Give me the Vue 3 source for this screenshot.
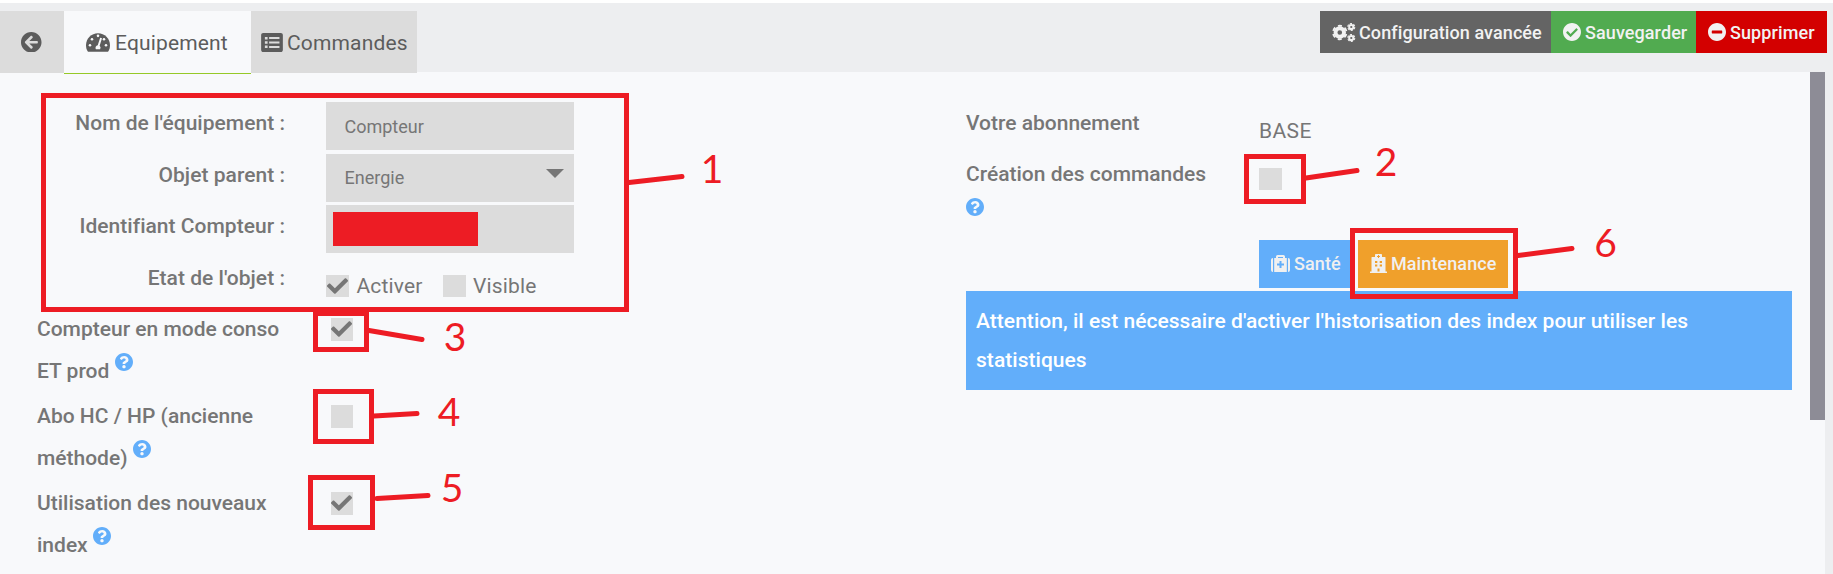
<script setup>
const ICONS = {
  check: 'M173.9 439.4l-166.4-166.4c-10-10-10-26.2 0-36.2l36.2-36.2c10-10 26.2-10 36.2 0L192 312.7 432.1 72.6c10-10 26.2-10 36.2 0l36.2 36.2c10 10 10 26.2 0 36.2l-294.4 294.4c-10 10-26.2 10-36.2 0z',
  checkCircle: 'M504 256c0 136.967-111.033 248-248 248S8 392.967 8 256 119.033 8 256 8s248 111.033 248 248zM227.314 387.314l184-184c6.248-6.248 6.248-16.379 0-22.627l-22.627-22.627c-6.248-6.249-16.379-6.249-22.628 0L216 308.118l-70.059-70.059c-6.248-6.248-16.379-6.248-22.628 0l-22.627 22.627c-6.248 6.248-6.248 16.379 0 22.627l104 104c6.249 6.249 16.379 6.249 22.628.001z',
  minus: 'M256 8C119 8 8 119 8 256s111 248 248 248 248-111 248-248S393 8 256 8zM124 296c-6.6 0-12-5.4-12-12v-56c0-6.6 5.4-12 12-12h264c6.6 0 12 5.4 12 12v56c0 6.6-5.4 12-12 12H124z',
  help: 'M504 256c0 136.997-111.043 248-248 248S8 392.997 8 256C8 119.083 119.043 8 256 8s248 111.083 248 248zM262.655 90c-54.497 0-89.255 22.957-116.549 63.758-3.536 5.286-2.353 12.415 2.715 16.258l34.699 26.31c5.205 3.947 12.621 3.008 16.665-2.122 17.864-22.658 30.113-35.797 57.303-35.797 20.429 0 45.698 13.148 45.698 32.958 0 14.976-12.363 22.667-32.534 33.976C247.128 238.528 216 254.941 216 296v4c0 6.627 5.373 12 12 12h56c6.627 0 12-5.373 12-12v-1.333c0-28.462 83.186-29.647 83.186-106.667 0-58.002-60.165-102-116.531-102zM256 338c-25.365 0-46 20.635-46 46 0 25.364 20.635 46 46 46s46-20.636 46-46c0-25.365-20.635-46-46-46z',
  back: 'M256 504C119 504 8 393 8 256S119 8 256 8s248 111 248 248-111 248-248 248zm28.9-143.6L209.4 288H392c13.3 0 24-10.7 24-24v-16c0-13.3-10.7-24-24-24H209.4l75.5-72.4c9.7-9.3 9.9-24.8.4-34.3l-11-10.9c-9.4-9.4-24.6-9.4-33.9 0L107.7 239c-9.4 9.4-9.4 24.6 0 33.9l132.7 132.7c9.4 9.4 24.6 9.4 33.9 0l11-10.9c9.5-9.5 9.3-25-.4-34.3z',
}
const options = [
  { first: 'Compteur en mode conso', last: 'ET prod', checked: true },
  { first: 'Abo HC / HP (ancienne', last: 'méthode)', checked: false },
  { first: 'Utilisation des nouveaux', last: 'index', checked: true },
]
const frames = [
  { x: 41, y: 93, w: 588, h: 219 },
  { x: 1244, y: 154, w: 62, h: 50 },
  { x: 313, y: 311, w: 56, h: 41 },
  { x: 313, y: 389, w: 61, h: 55 },
  { x: 308, y: 475, w: 67, h: 55 },
  { x: 1350, y: 228, w: 168, h: 71 },
]
const leaders = [
  'M629 182.5L682 176.5', 'M1306 178L1357 170.5', 'M369 330.5L422 339.5',
  'M374 416L417 413.5', 'M377 498.5L428 495.5', 'M1518 255.5L1572 248.5',
]
const digits = [
  { n: 1, x: 712, y: 183 }, { n: 2, x: 1386, y: 176 }, { n: 3, x: 455, y: 351 },
  { n: 4, x: 449, y: 426 }, { n: 5, x: 452, y: 502 }, { n: 6, x: 1605.5, y: 257 },
]
</script>

<template>
  <div class="page">
    <header class="topbar">
      <nav class="tabs">
        <a class="tab tab-back"><svg class="ic-back" viewBox="8 8 496 496"><path :d="ICONS.back" /></svg></a>
        <a class="tab tab-active">
          <svg class="ic-gauge" viewBox="0 32 576 448">
            <path d="M288 32C129 32 0 161 0 320c0 53 14 102 39 145 6 9 16 15 27 15h444c11 0 21-6 27-15 25-43 39-92 39-145 0-159-129-288-288-288z" />
            <g class="gauge-cut"><circle cx="288" cy="96" r="31" /><circle cx="144" cy="176" r="31" /><circle cx="96" cy="320" r="31" /><circle cx="480" cy="320" r="31" /><circle cx="432" cy="176" r="31" /><path d="M339 143l45 13-57 180a63 63 0 0 1 12 80H237a63 63 0 0 1 45-95z" /></g>
          </svg>
          <span>Equipement</span>
        </a>
        <a class="tab tab-cmd">
          <svg class="ic-list" viewBox="0 32 512 448"><path fill-rule="evenodd" d="M464 480H48c-27 0-48-21-48-48V80c0-27 21-48 48-48h416c27 0 48 21 48 48v352c0 27-21 48-48 48zM88 124h64v64H88zM88 224h64v64H88zM88 324h64v64H88zM188 128h244v48H188zM188 232h244v48H188zM188 336h244v48H188z" /></svg>
          <span>Commandes</span>
        </a>
      </nav>
      <div class="actions">
        <a class="btn btn-config">
          <svg class="ic-cogs" viewBox="0 0 640 512">
            <g class="gear">
              <circle cx="206" cy="256" r="115" stroke-width="104" />
              <circle cx="206" cy="256" r="182" stroke-width="48" pathLength="60" stroke-dasharray="5.600 4.400" transform="rotate(13 206 256)" />
              <circle cx="516" cy="108" r="57" stroke-width="54" />
              <circle cx="516" cy="108" r="94" stroke-width="28" pathLength="60" stroke-dasharray="6 4" />
              <circle cx="516" cy="404" r="57" stroke-width="54" />
              <circle cx="516" cy="404" r="94" stroke-width="28" pathLength="60" stroke-dasharray="6 4" />
            </g>
          </svg>
          <span>Configuration avancée</span>
        </a>
        <a class="btn btn-save"><svg class="ic-btn" viewBox="8 8 496 496"><path :d="ICONS.checkCircle" /></svg><span>Sauvegarder</span></a>
        <a class="btn btn-delete"><svg class="ic-btn" viewBox="8 8 496 496"><path :d="ICONS.minus" /></svg><span>Supprimer</span></a>
      </div>
    </header>

    <main class="content">
      <form class="left">
        <div class="row r52"><label class="label">Nom de l'équipement :</label><div class="field"><span>Compteur</span></div></div>
        <div class="row r51"><label class="label">Objet parent :</label><div class="field select"><span class="raised">Energie</span><svg class="caret" viewBox="0 0 18 9"><path d="M0 0H18L9 9Z" /></svg></div></div>
        <div class="row r52"><label class="label">Identifiant Compteur :</label><div class="field masked"><i class="mask"></i></div></div>
        <div class="row r51">
          <label class="label">Etat de l'objet :</label>
          <div class="checks">
            <i class="box"><svg class="tick" viewBox="0 65 512 382"><path :d="ICONS.check" /></svg></i><span class="c1">Activer</span>
            <i class="box"></i><span class="c2">Visible</span>
          </div>
        </div>
        <div v-for="o in options" :key="o.last" class="row option">
          <div class="caption"><span>{{ o.first }}</span><br><span>{{ o.last }}</span><svg class="help" viewBox="8 8 496 496"><path :d="ICONS.help" /></svg></div>
          <i class="box"><svg v-if="o.checked" class="tick" viewBox="0 65 512 382"><path :d="ICONS.check" /></svg></i>
        </div>
      </form>

      <section class="right">
        <div class="row r51"><div class="caption-r">Votre abonnement</div><div class="base">BASE</div></div>
        <div class="row creation"><div class="caption-r">Création des commandes<svg class="help help-block" viewBox="8 8 496 496"><path :d="ICONS.help" /></svg></div><i class="box"></i></div>
        <div class="tools">
          <a class="tool tool-health">
            <svg class="ic-kit" viewBox="0 0 19 17"><path fill-rule="evenodd" d="M0 5a2 2 0 0 1 2-2V17a2 2 0 0 1-2-2zM17 3a2 2 0 0 1 2 2V15a2 2 0 0 1-2 2zM3.2 3H5V1.6Q5 0 6.6 0H12.400Q14 0 14 1.600V3H15.800V17H3.200zM7 3H12V2H7zM8.500 6V8.500H6V10.500H8.500V13H10.500V10.500H13V8.500H10.500V6z" /></svg>
            <span>Santé</span>
          </a>
          <a class="tool tool-maint">
            <svg class="ic-hosp" viewBox="0 0 17 19"><path fill-rule="evenodd" d="M5 3V.8Q5 0 5.800 0H11.200Q12 0 12 .8V3H15Q15.500 3 15.500 3.500V17.600H17V19H0V17.600H1.500V3.500Q1.500 3 2 3zM8 1V2H7V3H8V4H9V3H10V2H9V1zM5 7V9H7.300V7zM9.700 7V9H12V7zM5 10.500V12.500H7.300V10.500zM9.700 10.500V12.500H12V10.500zM7.500 14.500V17.600H9.500V14.500z" /></svg>
            <span>Maintenance</span>
          </a>
        </div>
        <div class="alert"><span>Attention, il est nécessaire d'activer l'historisation des index pour utiliser les</span><br><span>statistiques</span></div>
      </section>

      <div class="track"><i class="thumb"></i></div>
    </main>

    <svg class="notes" width="1833" height="574" viewBox="0 0 1833 574">
      <rect v-for="f in frames" :key="f.x + '-' + f.y" :x="f.x + 2.5" :y="f.y + 2.5" :width="f.w - 5" :height="f.h - 5" />
      <path v-for="l in leaders" :key="l" :d="l" />
      <text v-for="d in digits" :key="d.n" :x="d.x" :y="d.y">{{ d.n }}</text>
    </svg>
  </div>
</template>

<style>
body { margin: 0; overflow: hidden; }
</style>
<style scoped>
.page { position: relative; width: 1833px; height: 574px; overflow: hidden; background: #f8f9fb; font-family: Roboto, sans-serif; color: #767676; display: flex; flex-direction: column; }
svg { display: block; flex: none; fill: currentColor; }
span { white-space: nowrap; }
i { display: block; flex: none; }
.topbar { height: 61px; flex: none; padding-top: 8px; border-top: 3px solid #fff; background: #edeef0; display: flex; justify-content: space-between; align-items: flex-start; }
.tabs { display: flex; font-size: 21px; letter-spacing: 0.15px; color: #5c5c5c; }
.tab { box-sizing: border-box; height: 62px; display: flex; align-items: center; background: #dcdcdc; line-height: 50px; }
.tab span { padding-top: 2px; }
.tab-back { width: 64px; padding-left: 21px; }
.ic-back { width: 20.500px; height: 20.500px; }
.tab-active { height: 63px; width: 187px; padding-left: 22px; background: #f8f9fb; border-bottom: 1px solid #96c927; }
.ic-gauge { width: 24px; height: 19px; margin-right: 5px; }
.gauge-cut { fill: #f8f9fb; }
.tab-cmd { width: 166px; padding-left: 10px; }
.ic-list { width: 22px; height: 19px; margin-right: 4px; }
.actions { display: flex; padding-right: 6px; font-size: 18px; letter-spacing: 0.09px; font-weight: 500; color: #f2f2f2; }
.btn { box-sizing: border-box; height: 42px; display: flex; align-items: center; padding-left: 12px; gap: 4px; }
.btn-config { width: 231px; background: #646464; gap: 3px; }
.btn-save { width: 145px; background: #51ab50; }
.btn-delete { width: 131px; background: #d30000; }
.ic-cogs { width: 24px; height: 19px; }
.gear { fill: none; stroke: currentColor; }
.ic-btn { width: 18px; height: 18px; }
.content { flex: 1; display: flex; align-items: flex-start; }
.left { width: 966px; padding-top: 30px; flex: none; }
.row { display: flex; align-items: flex-start; }
.r52 { height: 52px; }
.r51 { height: 51px; }
.label { width: 285px; margin-right: 41px; text-align: right; font-size: 21px; letter-spacing: 0.03px; font-weight: 500; line-height: 42px; }
.field { box-sizing: border-box; width: 248px; height: 48px; padding: 0 10px 0 18.500px; background: #dcdcdc; display: flex; align-items: center; justify-content: space-between; font-size: 18px; }
.raised { padding-bottom: 2px; }
.caret { width: 18px; height: 9px; margin-bottom: 10px; }
.masked { padding: 0 7px; }
.mask { width: 145px; height: 34px; background: #ed1c24; }
.checks { display: flex; padding-top: 18px; font-size: 21px; letter-spacing: 0.15px; line-height: 23px; }
.box { width: 22px; height: 23px; background: #dcdcdc; display: flex; align-items: center; justify-content: center; }
.checks .box { width: 23px; height: 22px; }
.tick { width: 21px; height: 16px; }
.c1 { box-sizing: border-box; width: 94px; padding-left: 7.500px; }
.c2 { padding-left: 7px; }
.option { height: 87px; padding-left: 37px; }
.caption { width: 294px; font-size: 21px; font-weight: 500; line-height: 42px; }
.option .box { margin-top: 10px; }
.option .tick { margin: 0 1px 2px 0; }
.help { display: inline-block; width: 18px; height: 18px; margin-left: 5.500px; color: #62aefa; vertical-align: 7px; }
.right { width: 826px; padding-top: 30px; flex: none; }
.caption-r { width: 293px; font-size: 21px; font-weight: 500; line-height: 42px; }
.base { font-size: 21px; letter-spacing: 0.4px; line-height: 58px; }
.creation { height: 87px; }
.creation .box { width: 23px; height: 22px; margin-top: 15px; }
.help-block { display: block; margin: 3px 0 0 -0.500px; }
.tools { display: flex; gap: 8px; padding-left: 293px; height: 51px; font-size: 18px; font-weight: 500; color: #f0f0f0; letter-spacing: 0.09px; }
.tool { box-sizing: border-box; height: 48px; display: flex; align-items: center; gap: 4px; padding: 0 0 2px 12px; }
.tool-health { width: 91px; background: #62aefa; }
.tool-maint { width: 150px; background: #f0a02b; }
.ic-kit { width: 19px; height: 17px; }
.ic-hosp { width: 17px; height: 19px; }
.alert { box-sizing: border-box; height: 99px; padding: 11px 10px 9px; background: #62aefa; color: #fff; font-size: 21px; letter-spacing: 0.04px; font-weight: 500; line-height: 39px; }
.track { margin-left: 18px; width: 15px; height: 502px; border-right: 8px solid #edeef0; }
.thumb { height: 348px; background: #8d8c96; }
.notes { position: absolute; left: 0; top: 0; }
.notes rect { fill: none; stroke: #ed1c24; stroke-width: 5; }
.notes path { fill: none; stroke: #ed1c24; stroke-width: 5; stroke-linecap: round; }
.notes text { fill: #ed1c24; font: 39px Lato, sans-serif; text-anchor: middle; }
</style>
